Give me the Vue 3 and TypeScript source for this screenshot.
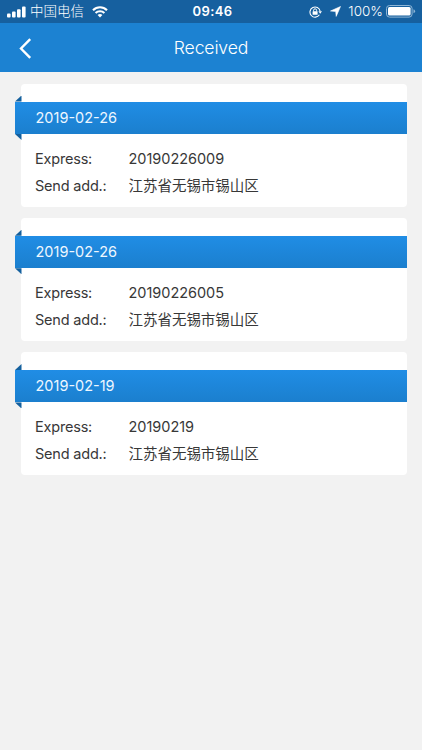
<script setup lang="ts">
interface Parcel {
  date: string
  express: string
  address: string
}

const parcels: Parcel[] = [
  { date: '2019-02-26', express: '20190226009', address: '江苏省无锡市锡山区' },
  { date: '2019-02-26', express: '20190226005', address: '江苏省无锡市锡山区' },
  { date: '2019-02-19', express: '20190219', address: '江苏省无锡市锡山区' },
]
</script>

<template>
  <div class="screen">
    <div class="status">
      <div class="side">
        <svg class="signal" width="19" height="12" viewBox="0 0 19 12" fill="#fff">
          <rect x="0" y="7.6" width="3.6" height="4" rx="1" />
          <rect x="5" y="5.6" width="3.6" height="6" rx="1" />
          <rect x="10" y="3.2" width="3.6" height="8.4" rx="1" />
          <rect x="15" y="0.4" width="3.6" height="11.2" rx="1" />
        </svg>
        <span class="carrier">中国电信</span>
        <svg class="wifi" width="16" height="12" viewBox="0 0 16 12" fill="none" stroke="#fff" stroke-width="2.1">
          <path d="M1 4.2C5 .2 11 .2 15 4.2" />
          <path d="M3.6 7C6 4.6 10 4.6 12.4 7" />
          <path d="M8 11.4L5.6 9C7 7.8 9 7.8 10.4 9Z" fill="#fff" stroke="none" />
        </svg>
      </div>
      <span class="clock">09:46</span>
      <div class="side right">
        <svg class="lock" width="13" height="12" viewBox="0 0 13 12" fill="none" stroke="#fff">
          <path d="M10.4 8.8A5.1 5.1 0 1 1 11.1 5.2" stroke-width="1.1" />
          <path d="M9.4 5.2H13L11.2 7.7Z" fill="#fff" stroke="none" />
          <rect x="3.6" y="5.2" width="5" height="3.6" rx=".5" fill="#fff" stroke="none" />
          <path d="M4.6 5.5V4.3a1.5 1.5 0 0 1 3 0v1.2" stroke-width="1" />
        </svg>
        <svg class="arrow" width="11" height="11" viewBox="0 0 11 11" fill="#fff" stroke="#fff" stroke-width=".6" stroke-linejoin="round">
          <path d="M10.5.5L6.2 10.4 5.7 5.5.5 5Z" />
        </svg>
        <span class="percent">100%</span>
        <svg class="battery" width="30" height="13" viewBox="0 0 30 13">
          <rect x=".5" y=".5" width="25.6" height="11.6" rx="3" fill="none" stroke="#8fb6d6" />
          <rect x="2" y="2" width="22.6" height="8.6" rx="1.5" fill="#fff" />
          <path d="M27.5 4.3q1.6.4 1.6 2t-1.6 2z" fill="#8fb6d6" />
        </svg>
      </div>
    </div>

    <header class="nav">
      <svg class="back" width="13" height="21" viewBox="0 0 13 21" fill="none" stroke="#fff" stroke-width="2.4">
        <path d="M11.2 1.2L2 10.5 11.2 19.8" />
      </svg>
      <h1>Received</h1>
    </header>

    <main class="list">
      <article v-for="parcel in parcels" :key="parcel.express" class="card">
        <div class="ribbon">{{ parcel.date }}</div>
        <dl>
          <dt>Express:</dt>
          <dd>{{ parcel.express }}</dd>
          <dt>Send add.:</dt>
          <dd>{{ parcel.address }}</dd>
        </dl>
      </article>
    </main>
  </div>
</template>

<style>
body {
  margin: 0;
  background: #f2f2f2;
}
</style>

<style scoped>
.screen {
  min-height: 750px;
  background: #f2f2f2;
  color: #383838;
  font-family: Inter, "Noto Sans CJK SC", sans-serif;
}

.status {
  display: grid;
  grid-template-columns: 1fr auto 1fr;
  align-items: center;
  height: 23px;
  padding: 0 6px 0 7px;
  background: #16609f;
  color: #fff;
  font-size: 13px;
  line-height: 23px;
}

.side {
  display: flex;
  align-items: center;
  height: 23px;
}

.right {
  justify-content: flex-end;
}

.carrier {
  margin: 0 8px 0 4px;
  font-size: 13.5px;
  font-weight: 300;
}

.clock {
  padding-left: 2px;
  font-size: 13px;
  font-weight: 600;
  letter-spacing: 0.35px;
}

.arrow {
  margin: 0 7px 0 8px;
}

.percent {
  margin-right: 3px;
  font-size: 13.5px;
  font-weight: 300;
}

.nav {
  display: grid;
  grid-template-columns: 32px 1fr 32px;
  align-items: center;
  height: 49px;
  padding: 0 19px;
  background: #1c82d2;
}

h1 {
  margin: 0;
  color: #fff;
  font-size: 17.6px;
  font-weight: 300;
  letter-spacing: -0.15px;
  line-height: 50px;
  text-align: center;
}

.list {
  display: flex;
  flex-direction: column;
  gap: 11.2px;
  padding: 11.5px 15px 0 21px;
}

.card {
  box-sizing: border-box;
  height: 123px;
  padding-top: 18px;
  border-radius: 4px;
  background: #fff;
}

.ribbon {
  position: relative;
  height: 32.5px;
  margin-left: -6px;
  padding-left: 20.5px;
  background: linear-gradient(#208de5, #1b7fce);
  color: #eef7ff;
  font-size: 14.5px;
  line-height: 32.5px;
}

.ribbon::before,
.ribbon::after {
  position: absolute;
  left: 0;
  width: 6.5px;
  height: 6px;
  background: #14609e;
  content: "";
}

.ribbon::before {
  bottom: 100%;
  clip-path: polygon(100% 0, 100% 100%, 0 100%);
}

.ribbon::after {
  top: 100%;
  clip-path: polygon(0 0, 100% 0, 100% 100%);
}

dl {
  display: grid;
  grid-template-columns: 93.5px 1fr;
  margin: 0;
  padding: 11px 14px 0;
  font-size: 14.5px;
  line-height: 27px;
}

dt,
dd {
  height: 27px;
  margin: 0;
}

dt {
  letter-spacing: -0.2px;
}

dd {
  letter-spacing: -0.03px;
}
</style>
